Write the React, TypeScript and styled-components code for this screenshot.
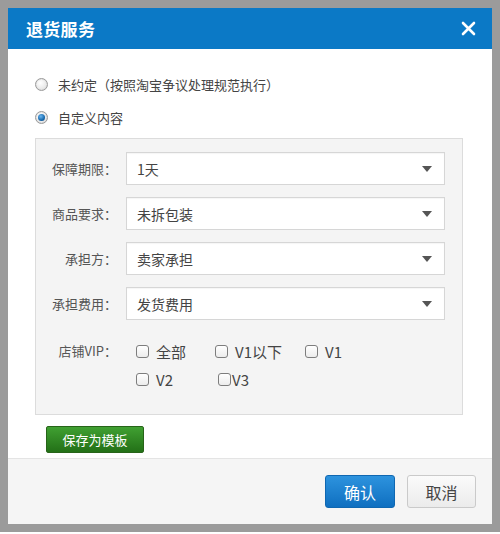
import React, { useState } from "react";
import styled, { createGlobalStyle } from "styled-components";

const GlobalStyle = createGlobalStyle`
  html, body {
    margin: 0;
    padding: 0;
    background: #fff;
  }
  body {
    font-family: "Noto Sans CJK SC", "Liberation Sans", sans-serif;
    color: #333;
  }
`;

const selectRows = [
  { label: "保障期限：", value: "1天" },
  { label: "商品要求：", value: "未拆包装" },
  { label: "承担方：", value: "卖家承担" },
  { label: "承担费用：", value: "发货费用" },
];

const vipLines = [
  [
    { text: "全部", width: 79, gap: 7 },
    { text: "V1以下", width: 90, gap: 7 },
    { text: "V1", width: 0, gap: 7 },
  ],
  [
    { text: "V2", width: 82, gap: 7 },
    { text: "V3", width: 0, gap: 1 },
  ],
];

const App: React.FC = () => {
  const [mode, setMode] = useState<"none" | "custom">("custom");

  return (
    <>
      <GlobalStyle />
      <StyledFrame>
        <StyledHeader>
          <StyledTitle>退货服务</StyledTitle>
          <StyledClose aria-label="close">
            <svg width="15" height="15" viewBox="0 0 15 15">
              <path d="M2 2 L13 13 M13 2 L2 13" stroke="#fff" strokeWidth="2.6" strokeLinecap="round" />
            </svg>
          </StyledClose>
        </StyledHeader>

        <StyledBody>
          <StyledRadioRow onClick={() => setMode("none")}>
            <StyledRadio $checked={mode === "none"} />
            <span>未约定（按照淘宝争议处理规范执行）</span>
          </StyledRadioRow>
          <StyledRadioRow onClick={() => setMode("custom")}>
            <StyledRadio $checked={mode === "custom"} />
            <span>自定义内容</span>
          </StyledRadioRow>

          <StyledPanel>
            {selectRows.map((row) => (
              <StyledFieldRow key={row.label}>
                <StyledLabel>{row.label}</StyledLabel>
                <StyledSelect>
                  <span>{row.value}</span>
                  <StyledArrow />
                </StyledSelect>
              </StyledFieldRow>
            ))}

            <StyledVipRow>
              <StyledLabel>店铺VIP：</StyledLabel>
              <StyledVipOptions>
                {vipLines.map((line, idx) => (
                  <StyledVipLine key={idx}>
                    {line.map((opt) => (
                      <StyledOption key={opt.text} $width={opt.width}>
                        <StyledCheckbox />
                        <StyledOptionText $gap={opt.gap}>{opt.text}</StyledOptionText>
                      </StyledOption>
                    ))}
                  </StyledVipLine>
                ))}
              </StyledVipOptions>
            </StyledVipRow>
          </StyledPanel>

          <StyledSaveButton>保存为模板</StyledSaveButton>
        </StyledBody>

        <StyledFooter>
          <StyledButton $primary>确认</StyledButton>
          <StyledButton>取消</StyledButton>
        </StyledFooter>
      </StyledFrame>
    </>
  );
};

const StyledFrame = styled.div`
  width: 484px;
  border: 8px solid #9b9b9b;
  display: flex;
  flex-direction: column;
  background: #fff;
`;

const StyledHeader = styled.div`
  height: 41px;
  background: #0b79c6;
  display: flex;
  align-items: center;
  justify-content: space-between;
  padding: 0 16px 0 18px;
`;

const StyledTitle = styled.div`
  color: #fff;
  font-size: 17px;
  font-weight: bold;
  letter-spacing: 0.3px;
`;

const StyledClose = styled.div`
  width: 15px;
  height: 15px;
  display: flex;
  cursor: pointer;
`;

const StyledBody = styled.div`
  display: flex;
  flex-direction: column;
  padding: 25px 29px 5px 27px;
`;

const StyledRadioRow = styled.label`
  display: flex;
  align-items: center;
  height: 20px;
  font-size: 13px;
  color: #444;
  cursor: pointer;
  & + & {
    margin-top: 13px;
  }
`;

const StyledRadio = styled.span<{ $checked: boolean }>`
  width: 11px;
  height: 11px;
  border-radius: 50%;
  border: 1px solid #9a9a9a;
  background: radial-gradient(circle at 40% 35%, #fff 0%, #e6e6e6 70%, #d0d0d0 100%);
  margin-right: 10px;
  position: relative;
  box-shadow: inset 0 0 1px #bbb;
  &::after {
    content: "";
    display: ${({ $checked }) => ($checked ? "block" : "none")};
    position: absolute;
    left: 2px;
    top: 2px;
    width: 7px;
    height: 7px;
    border-radius: 50%;
    background: radial-gradient(circle at 40% 35%, #6ab6f0 0%, #1769ad 60%, #0b3f73 100%);
  }
`;

const StyledPanel = styled.div`
  margin-top: 11px;
  background: #f4f4f4;
  border: 1px solid #dcdcdc;
  padding: 13px 17px 21px 0;
  display: flex;
  flex-direction: column;
`;

const StyledFieldRow = styled.div`
  display: flex;
  align-items: center;
  & + & {
    margin-top: 12px;
  }
`;

const StyledLabel = styled.div`
  width: 81px;
  margin-right: 9px;
  text-align: right;
  font-size: 13px;
  color: #555;
  flex-shrink: 0;
`;

const StyledSelect = styled.div`
  flex: 1;
  height: 31px;
  border: 1px solid #d6d6d6;
  background: #fff;
  box-shadow: inset 0 1px 1px rgba(0, 0, 0, 0.04);
  display: flex;
  align-items: center;
  justify-content: space-between;
  padding: 0 12px 0 10px;
  font-size: 14px;
  color: #444;
`;

const StyledArrow = styled.span`
  width: 0;
  height: 0;
  border-left: 5px solid transparent;
  border-right: 5px solid transparent;
  border-top: 6px solid #555;
`;

const StyledVipRow = styled.div`
  display: flex;
  align-items: flex-start;
  margin-top: 17px;
  ${StyledLabel} {
    line-height: 28px;
  }
`;

const StyledVipOptions = styled.div`
  display: flex;
  flex-direction: column;
  padding-left: 10px;
`;

const StyledVipLine = styled.div`
  display: flex;
  align-items: center;
  height: 28px;
`;

const StyledOption = styled.label<{ $width: number }>`
  display: flex;
  align-items: center;
  width: ${({ $width }) => ($width ? `${$width}px` : "auto")};
  font-size: 15px;
  color: #444;
  cursor: pointer;
`;

const StyledOptionText = styled.span<{ $gap: number }>`
  margin-left: ${({ $gap }) => $gap}px;
`;

const StyledCheckbox = styled.span`
  width: 11px;
  height: 11px;
  border: 1px solid #7d7d7d;
  border-radius: 3px;
  background: linear-gradient(#fff, #ececec);
  flex-shrink: 0;
`;

const StyledSaveButton = styled.button`
  align-self: flex-start;
  margin: 11px 0 0 11px;
  width: 98px;
  height: 27px;
  border: 1px solid #276419;
  border-radius: 2px;
  background: linear-gradient(#40a032, #237017);
  color: #fff;
  font-family: "Noto Sans CJK SC", sans-serif;
  font-size: 13px;
  padding: 0;
  cursor: pointer;
`;

const StyledFooter = styled.div`
  height: 65px;
  border-top: 1px solid #e4e4e4;
  background: #f5f5f5;
  display: flex;
  align-items: center;
  justify-content: flex-end;
  gap: 12px;
  padding-right: 16px;
`;

const StyledButton = styled.button<{ $primary?: boolean }>`
  width: ${({ $primary }) => ($primary ? "70px" : "69px")};
  height: 33px;
  border-radius: 3px;
  border: 1px solid ${({ $primary }) => ($primary ? "#0f67b1" : "#cacaca")};
  background: ${({ $primary }) =>
    $primary ? "linear-gradient(#2d93de, #0f6fc0)" : "linear-gradient(#fbfbfb, #ebebeb)"};
  color: ${({ $primary }) => ($primary ? "#fff" : "#444")};
  font-family: "Noto Sans CJK SC", sans-serif;
  font-size: 16px;
  padding: 0;
  cursor: pointer;
`;

export default App;
